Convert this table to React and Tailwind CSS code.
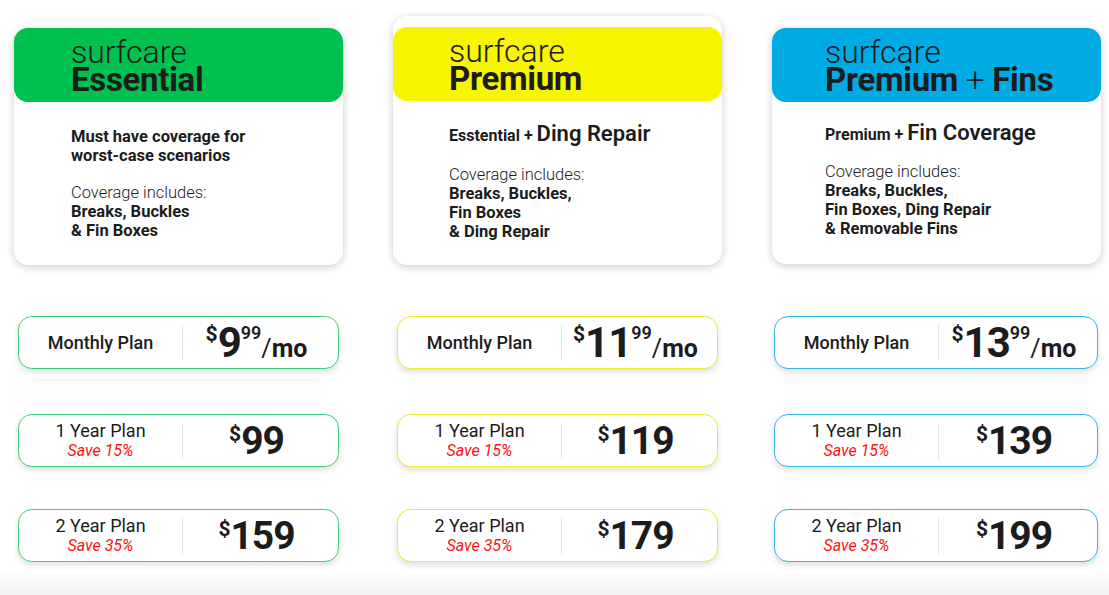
import React from 'react';

const plans = [
  {
    name: 'Essential',
    header: 'bg-[#00c04f]',
    border: 'border-[#3fd07d]',
    cardTop: 'mt-[12px]',
    pad: 'pl-[57px]',
    rowInset: 'px-[4px]',
    monthly: '9',
    year1: '99',
    year2: '159',
  },
  {
    name: 'Premium',
    header: 'bg-[#f8f500]',
    border: 'border-[#f2ec2a]',
    cardTop: 'mt-0 pt-[11px]',
    pad: 'pl-[56px]',
    rowInset: 'px-[4px]',
    monthly: '11',
    year1: '119',
    year2: '179',
  },
  {
    name: 'Premium + Fins',
    header: 'bg-[#00abe4]',
    border: 'border-[#35b8e8]',
    cardTop: 'mt-[12px]',
    pad: 'pl-[53px]',
    rowInset: 'pl-[2px] pr-[3px]',
    monthly: '13',
    year1: '139',
    year2: '199',
  },
];

function CardBody({ index }) {
  if (index === 0) {
    return (
      <div className="pt-[25px] pb-[25px] text-[16.5px] leading-[19px] text-[#1c1c1c]">
        <div className="font-bold">Must have coverage for<br />worst-case scenarios</div>
        <div className="mt-[18px] font-light">Coverage includes:</div>
        <div className="font-bold">Breaks, Buckles<br />&amp; Fin Boxes</div>
      </div>
    );
  }
  if (index === 1) {
    return (
      <div className="pt-[21px] pb-[24px] text-[16.5px] leading-[19px] text-[#1c1c1c]">
        <div className="leading-[24px]">
          <span className="font-bold text-[16px]">Esstential + </span>
          <span className="font-semibold text-[22px]">Ding Repair</span>
        </div>
        <div className="mt-[17px] font-light">Coverage includes:</div>
        <div className="font-bold">Breaks, Buckles,<br />Fin Boxes<br />&amp; Ding Repair</div>
      </div>
    );
  }
  return (
    <div className="pt-[19px] pb-[26px] text-[16.5px] leading-[19px] text-[#1c1c1c]">
      <div className="leading-[24px]">
        <span className="font-bold text-[16px]">Premium + </span>
        <span className="font-semibold text-[22px]">Fin Coverage</span>
      </div>
      <div className="mt-[15px] font-light">Coverage includes:</div>
      <div className="font-bold">Breaks, Buckles,<br />Fin Boxes, Ding Repair<br />&amp; Removable Fins</div>
    </div>
  );
}

function HeaderTitle({ name }) {
  if (name === 'Premium + Fins') {
    return (
      <div className="text-[33px] leading-[28px] font-bold tracking-[-0.3px]">
        Premium <span className="font-light">+</span> Fins
      </div>
    );
  }
  return <div className="text-[33px] leading-[28px] font-bold tracking-[-0.3px]">{name}</div>;
}

function PriceRow({ border, label, save, children, className }) {
  return (
    <div className={`flex h-[53px] items-center rounded-[14px] border bg-white shadow-[0_3px_6px_rgba(0,0,0,0.13)] ${border} ${className || ''}`}>
      <div className="flex w-[163px] flex-col items-center justify-center text-[#1c1c1c]">
        <div className={`text-[18px] ${save ? 'leading-[20px]' : 'font-medium leading-[22px]'}`}>{label}</div>
        {save && <div className="text-[16px] italic leading-[20px] text-[#ff1010]">{save}</div>}
      </div>
      <div className="h-[36px] w-px bg-[#e4e4e4]" />
      <div className="flex flex-1 items-center justify-center pr-[8px] text-[#1c1c1c]">{children}</div>
    </div>
  );
}

function BigPrice({ value }) {
  return (
    <div className="flex items-start font-bold">
      <span className="mt-[2px] text-[21px] leading-[22px]">$</span>
      <span className="text-[39px] leading-[40px] tracking-[-1px]">{value}</span>
    </div>
  );
}

export default function App() {
  return (
    <div className="relative flex h-[595px] w-[1109px] flex-col overflow-hidden bg-white font-['Roboto',sans-serif]">
      <div className="flex gap-[50px] pl-[14px] pt-[16px]">
        {plans.map((p, i) => (
          <div key={p.name} className="flex w-[329px] flex-col">
            <div className="h-[300px]">
              <div className={`rounded-[14px] bg-white shadow-[0_2px_8px_rgba(0,0,0,0.2)] ${p.cardTop}`}>
                <div className={`h-[74px] rounded-[14px] pt-[10px] text-[#1c1c1c] ${p.header} ${p.pad}`}>
                  <div className="text-[32px] font-light leading-[28px]">surfcare</div>
                  <HeaderTitle name={p.name} />
                </div>
                <div className={p.pad}>
                  <CardBody index={i} />
                </div>
              </div>
            </div>
            <div className={`flex flex-col ${p.rowInset}`}>
              <PriceRow border={p.border} label="Monthly Plan">
                <div className="flex items-start font-bold">
                  <span className="mt-[1px] text-[21px] leading-[22px]">$</span>
                  <span className="text-[42px] leading-[42px] tracking-[-1px]">{p.monthly}</span>
                  <span className="mt-[1px] text-[18px] font-semibold leading-[20px]">99</span>
                  <span className="mt-[12px] text-[25px] leading-[30px]"><span className="font-normal">/</span>mo</span>
                </div>
              </PriceRow>
              <PriceRow border={p.border} label="1 Year Plan" save="Save 15%" className="mt-[45px]">
                <BigPrice value={p.year1} />
              </PriceRow>
              <PriceRow border={p.border} label="2 Year Plan" save="Save 35%" className="mt-[42px]">
                <BigPrice value={p.year2} />
              </PriceRow>
            </div>
          </div>
        ))}
      </div>
      <div className="absolute bottom-0 left-0 h-[24px] w-full bg-gradient-to-b from-white to-[#f1f1f1]" />
    </div>
  );
}
